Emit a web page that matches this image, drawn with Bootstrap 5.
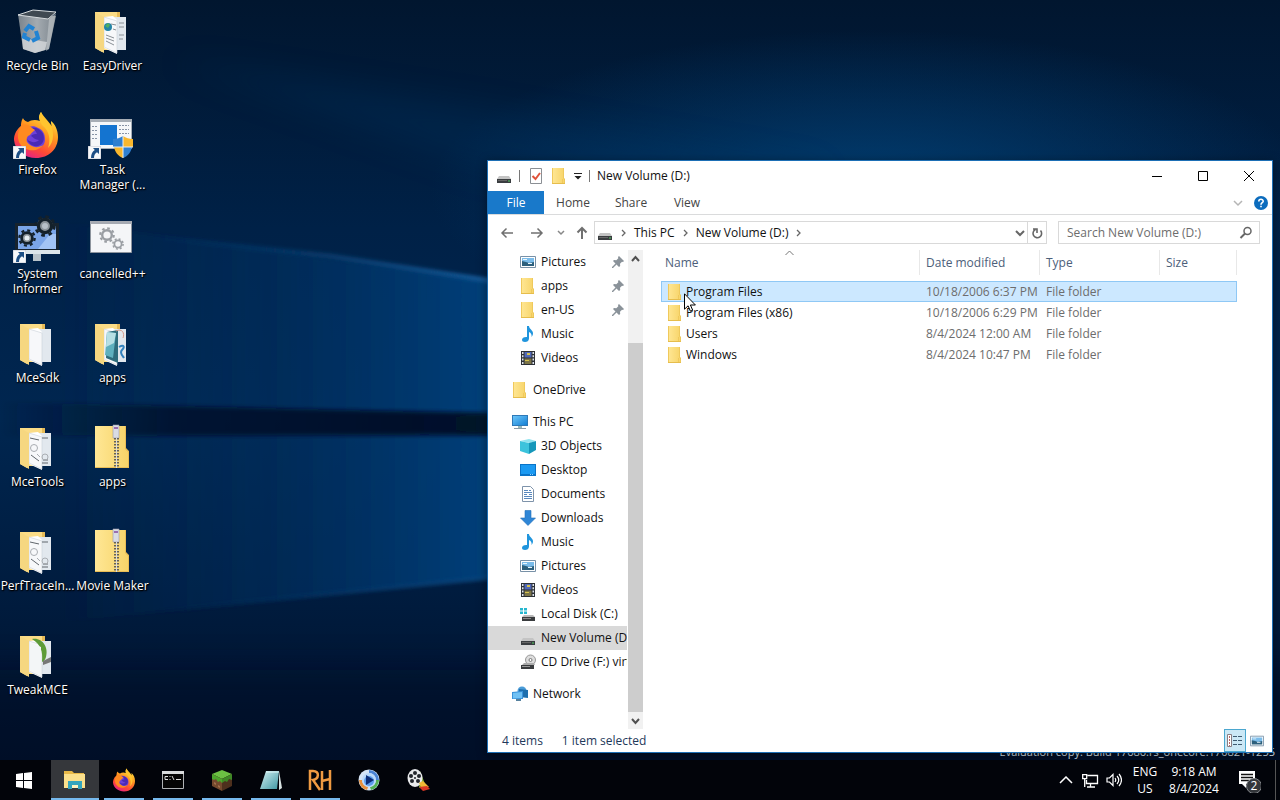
<!DOCTYPE html>
<html lang="en">
<head>
<meta charset="utf-8">
<meta name="viewport" content="width=device-width, initial-scale=1">
<title>New Volume (D:)</title>
<link href="https://cdn.jsdelivr.net/npm/bootstrap@5.3.0/dist/css/bootstrap.min.css" rel="stylesheet">
<style>
  body { font: 12px/16px "Open Sans", "Noto Sans", sans-serif; background: #001633; color: #111; }
  button { font: inherit; color: inherit; background: none; border: 0; padding: 0; }
  a { color: inherit; text-decoration: none; }
  svg { display: block; flex: none; }
  .i16 { width: 16px; height: 16px; }
  .wallpaper { inset: 0; width: 100%; height: 100%; }
  .desk-icons { display: grid; grid-template-rows: repeat(7, 104px); grid-auto-columns: 75px; grid-auto-flow: column; width: max-content; }
  .desk-icon { padding-top: 7px; color: #fff; line-height: 15px; text-align: center; text-shadow: 0 1px 2px #000, 1px 1px 1px #000; white-space: nowrap; }
  .desk-icon svg { width: 48px; height: 48px; margin: 0 13px 3px 12px; overflow: visible; }
  .watermark { right: 5px; bottom: 0; color: #dbe6f2; font-size: 11px; }
  .explorer { left: 487px; right: 7px; top: 160px; bottom: 7px; border: 1px solid #1d6fb5; background: #fff; box-shadow: 0 2px 10px rgba(0,0,0,.45); }
  .titlebar { height: 30px; padding-left: 8px; gap: 7px; }
  .vsep { width: 1px; height: 12px; background: #777; }
  .quick { gap: 7px; padding-left: 1px; }
  .winbtn { width: 46px; height: 29px; }
  .ribbon { height: 24px; border-bottom: 1px solid #dadbdc; color: #444; }
  .ribbon .tab { width: 58px; }
  .ribbon .tab-file { width: 56px; background: #1979ca; color: #fff; }
  .ribbon .tab-view { width: 54px; }
  .addrbar { height: 35px; padding: 0 12px 0 5px; }
  .navbtn { width: 28px; height: 22px; margin-right: 2px; }
  .navbtn-sm { width: 16px; }
  .navbtn-up { width: 25px; }
  .field { height: 23px; border: 1px solid #d9d9d9; }
  .crumbs { gap: 8px; padding-left: 2px; }
  .drop { margin-right: 2px; }
  .refresh { width: 19px; border-left: 1px solid #d9d9d9; }
  .search { width: 202px; margin-left: 11px; padding: 0 6px 0 8px; }
  .search input { border: 0; outline: 0; padding: 0; background: none; min-width: 0; color: #6d6d6d; }
  .search input::placeholder { color: #6d6d6d; opacity: 1; }
  .panes { min-height: 0; }
  .tree { flex: 0 0 140px; padding-right: 1px; gap: 8px; overflow: hidden; }
  .tree a { height: 24px; padding-left: 32px; gap: 5px; white-space: nowrap; overflow: hidden; }
  .tree a.top { padding-left: 24px; }
  .tree a.current { background: #d9d9d9; }
  .tree .pin { width: 12px; height: 12px; margin: 0 3px 0 auto; }
  .sbar { flex: 0 0 15px; background: #f1f1f1; }
  .sbar button { height: 17px; }
  .thumb { background: #cdcdcd; flex: 370 0 0; }
  .space { flex: 76 0 0; }
  .files { min-width: 0; padding: 0 35px 0 18px; }
  .files table { border-collapse: separate; border-spacing: 0; table-layout: fixed; }
  .files th { height: 25px; padding: 0 6px; font-weight: 400; color: #4c607a; border-right: 1px solid #e8e8e8; position: relative; }
  .files th:first-child { padding-left: 4px; }
  .files thead::after { content: ""; display: block; height: 6px; }
  .files td { height: 21px; padding: 0 6px; color: #6d6d6d; white-space: nowrap; border: solid transparent; border-width: 1px 0; }
  .files td:first-child { color: #111; }
  .files td a { gap: 3px; }
  .files .selected td { background: #cce8ff; border-color: #8fc8f5; }
  .files .selected td:first-child { border-left-width: 1px; padding-left: 5px; }
  .files .selected td:last-child { border-right-width: 1px; }
  .c-date, .c-type { width: 120px; }
  .c-size { width: 77px; }
  .sort { left: 50%; top: 0; margin-left: -5px; }
  .pointer { left: 196px; top: 132px; width: 12px; height: 19px; }
  .statusbar { height: 23px; padding-left: 14px; gap: 19px; color: #1e395b; }
  .viewbtn { width: 22px; height: 23px; }
  .viewbtn.on { background: #cbe8f6; border: 1px solid #4ba7cf; }
  .taskbar { height: 40px; background: #02040a; color: #fff; }
  .task { width: 48px; height: 40px; margin-right: 1px; position: relative; display: flex; align-items: center; justify-content: center; }
  .task.start { margin-right: 3px; }
  .task svg { width: 24px; height: 24px; }
  .task.open::after { content: ""; position: absolute; left: 4px; right: 4px; bottom: 0; height: 2px; background: #76b9ed; }
  .task.active { background: #35373b; }
  .task.active::after { left: 0; right: 0; }
  .traybtn { width: 24px; }
  .tray-text { line-height: 17px; text-align: center; }
  .lang { width: 38px; }
  .clock { width: 60px; }
  .notice { width: 51px; padding-right: 3px; }
  .showdesk { width: 5px; border-left: 1px solid #555; }
</style>
</head>
<body class="vh-100 d-flex flex-column overflow-hidden">

<svg width="0" height="0" class="position-absolute" aria-hidden="true">
  <defs>
    <linearGradient id="gFold" x1="0" x2="1"><stop offset="0" stop-color="#ffe795"/><stop offset="1" stop-color="#f7d469"/></linearGradient>
    <linearGradient id="gFox" x1=".8" y1="0" x2=".3" y2="1"><stop offset="0" stop-color="#fff14a"/><stop offset=".4" stop-color="#ff9a20"/><stop offset=".75" stop-color="#ff4a34"/><stop offset="1" stop-color="#e3208a"/></linearGradient>
    <linearGradient id="gBin" x1="0" x2="1"><stop offset="0" stop-color="#79838c"/><stop offset=".5" stop-color="#a4abb1"/><stop offset="1" stop-color="#7b848c"/></linearGradient>
    <linearGradient id="gBlue" x1="0" y1="0" x2="1" y2="1"><stop offset="0" stop-color="#6cc6fa"/><stop offset="1" stop-color="#1580d4"/></linearGradient>
    <linearGradient id="gNote" x1="0" y1="0" x2="1" y2="1"><stop offset="0" stop-color="#d6f2f4"/><stop offset="1" stop-color="#3e97a3"/></linearGradient>
    <symbol id="gear" viewBox="-10 -10 20 20"><circle r="6" fill="none" stroke="currentColor" stroke-width="3"/><circle r="8.5" fill="none" stroke="currentColor" stroke-width="2.6" stroke-dasharray="3.3 3.376"/></symbol>
    <symbol id="folder" viewBox="0 0 16 16"><path fill="#e6bd4c" d="M1 0h12v10l1 1v5H1z"/><path fill="url(#gFold)" d="M1 0h11.500v10.500l1 1V15H1z"/><path fill="#f0c95c" d="M1 0h1v15H1zM11 11h1v4h-1z"/></symbol>
    <symbol id="drive" viewBox="0 0 16 16"><path fill="#c4c4c4" d="M3 8h10l2 3H1z"/><path fill="#3a3d40" d="M1 11h14v4H1z"/><path fill="#666" d="M2 12h9v1H2z"/><path fill="#52d060" d="M12 12.500h2v1h-2z"/></symbol>
    <symbol id="drivec" viewBox="0 0 16 16"><path fill="#27b7cf" d="M0 2h3v2.500H0zM4 2h3v2.500H4zM0 5.500h3V8H0zM4 5.500h3V8H4z"/><path fill="#b8b8b8" d="M4 9h9l2 2H2z"/><path fill="#3a3c3e" d="M2 11h13v4H2z"/><path fill="#888" d="M3 12h8v1H3z"/></symbol>
    <symbol id="cdrom" viewBox="0 0 16 16"><circle cx="10.500" cy="6" r="5" fill="#ddd" stroke="#999"/><circle cx="10.500" cy="6" r="1.500" fill="#fff" stroke="#777"/><path fill="#aaa" d="M4 9h10l1 2H2z"/><path fill="#3a3c3e" d="M1 11h13v4H1z"/><path fill="#999" d="M2 12h8v1H2z"/></symbol>
    <symbol id="pict" viewBox="0 0 16 16"><path fill="#fff" stroke="#7891a7" d="M.5 2.500h15v11H.5z"/><path fill="#7bbcea" d="M2 4h12v5H2z"/><path fill="#2d607d" d="M2 7l4 1 3 1 5-1v4H2z"/><path fill="#e9f5fb" d="M3 5h4v1H3zM8 9h4v1H8z"/></symbol>
    <symbol id="music" viewBox="0 0 16 16"><path fill="#2095dd" d="M7 0h2c0 3 4 4 4 7.500 0 1.500-.8 2.500-1.500 3.500.5-2.500-.5-4-2.500-5v6.500C9 15 7 16 5 16s-3-1-3-2.300C2 12 4 10.700 7 11z"/></symbol>
    <symbol id="video" viewBox="0 0 16 16"><path fill="#2c3036" d="M1 1h14v14H1z"/><path fill="#dfe4ec" d="M2 2h1.500v2H2zM2 5.300h1.500v2H2zM2 8.600h1.500v2H2zM2 12h1.500v2H2zM12.500 2H14v2h-1.500zM12.500 5.300H14v2h-1.500zM12.500 8.600H14v2h-1.500zM12.500 12H14v2h-1.500z"/><path fill="#5169b8" d="M4.500 2h7v5.500h-7z"/><path fill="#7c7548" d="M4.500 8.500h7V14h-7z"/><path fill="#d5c24e" d="M7 3h3v2H7zM5 10h4v1H5z"/></symbol>
    <symbol id="pc" viewBox="0 0 16 16"><path fill="#2e79b8" d="M0 1h16v11H0z"/><path fill="url(#gBlue)" d="M1 2h14v9H1z"/><path fill="#9bb" d="M6 12h4v2H6z"/><path fill="#8b9ba8" d="M2 14h12v1H2z"/></symbol>
    <symbol id="cube" viewBox="0 0 16 16"><path fill="#8fe3ef" d="M0 3l9-2 7 2-6 2z"/><path fill="#3cc3dc" d="M0 3l9 2v11l-9-3z"/><path fill="#1597ba" d="M16 3L9 5v11l7-4z"/></symbol>
    <symbol id="desk" viewBox="0 0 16 16"><path fill="#0a74c8" d="M0 2h16v12H0z"/><path fill="#1b9af2" d="M1 3h14v9H1z"/><path fill="#8fd0ff" d="M10 12h1v1h-1zM12 12h1v1h-1z"/></symbol>
    <symbol id="docs" viewBox="0 0 16 16"><path fill="#fff" stroke="#7e93aa" d="M2.500.5h8l3 3v12h-11z"/><path stroke="#5888bd" d="M4 4.500h4M4 6.500h8M4 8.500h3M4 10.500h8M4 12.500h8M9 4.500h2M9 8.500h3"/></symbol>
    <symbol id="down" viewBox="0 0 16 16"><path fill="#2f86d6" stroke="#2270b8" stroke-width=".6" d="M5 .5h6V8h4.500L8 15.500.5 8H5z"/></symbol>
    <symbol id="net" viewBox="0 0 16 16"><circle cx="10" cy="5" r="4.500" fill="#4a9cd8"/><path fill="#1e6fae" d="M7 3l9 1v8l-9-1z"/><path fill="#3a92da" d="M0 6l11-1v8L0 13z"/><path fill="#70c1f4" d="M1 7l9-1v6l-9 .5z"/><path fill="#56819e" d="M4 13h5v2H4z"/></symbol>
    <symbol id="pinic" viewBox="0 0 12 12"><path fill="#8a9299" d="M7 0l5 5-1 1-1-.3-2 2 .2 2.300L7 11 4.500 8.500 1 12H0v-1l3.500-3.500L1 5l1-1 2.300.2 2-2L6 1z"/></symbol>
    <symbol id="fox" viewBox="0 0 48 48"><path fill="url(#gFox)" d="M29 1c-3 4-2 7-1 9-5-2-9-1-12 1-4-1-5-4-5-4-2 3-2 6-2 8C3 20 2 25 2 29c1 11 11 18 22 18 13 0 22-9 22-21 0-7-3-13-7-16 0 2 0 4 1 5C35 11 31 7 29 1z"/><path fill="#6d40d8" d="M33 28c0 7-5 10-10 10-6 0-10-4-10-9 0-6 4-8 7-8-2-2-4-3-7-2 3-4 9-5 13-2 5 2 7 6 7 11z"/><path fill="#4a2ab5" d="M30 21c3 4 3 12-4 14-6 1-10-3-11-7 4 4 9 4 12 1-4 0-6-3-8-4 2-2 4-2 6-2-1-3-3-5-6-6 4-1 8 0 11 4z"/><path fill="#ff8a20" d="M9 15c4-3 8-1 11 2 1 1 2 1 3 2-2 2-4 3-5 5-3 1-4 4-3 7 4 5 10 7 16 3-4 7-19 8-24-3-2-6-1-11 2-16z"/><path fill="#ffc42f" d="M29 1c4 8 13 11 12 24 0 5-2 9-5 12 3-9 1-17-5-22-3-3-5-9-2-14z"/></symbol>
    <symbol id="arrow" viewBox="0 0 13 13"><path fill="#f6f8fa" stroke="#aab" stroke-width=".6" d="M0 0h13v13H0z"/><path fill="#1d4f85" d="M5 2h6v6L9 6.200C7 7.500 6 9 6 12H3c0-4 1.500-6.500 3.800-8z"/></symbol>
    <symbol id="openf" viewBox="0 0 48 48"><path fill="#fbdc86" d="M8 5h25v38H15v2l-7-4z"/><path fill="#e7bb58" d="M30 5h3v5h-3z"/><path fill="#e2e8ee" d="M24 10h15v33H24z"/><path fill="#fff" d="M17 10l9-1 4 4v34l-13-6z"/><path fill="#f7f8fa" stroke="#c9d0d8" stroke-width=".6" d="M17 10l13 4v32l-13-6z"/><path fill="#f6d780" d="M8 5l9 5v36l-9-5z"/></symbol>
    <symbol id="docmarks" viewBox="0 0 48 48"><g fill="none" stroke="#a9adb2"><path d="M18 15l9 2M30 15h6M19 32l8 6M30 40h6M31 37h5" stroke="#60666c"/><circle cx="22" cy="25" r="3.500"/><circle cx="33" cy="34" r="3"/><path d="M25 31l3 3"/></g></symbol>
    <symbol id="zip" viewBox="0 0 48 48"><path fill="#e9bd56" d="M8 3h31v22l3 3v17H8z"/><path fill="url(#gFold)" d="M8 3h30v23l3 3v15H8z"/><path fill="#d9dce3" stroke="#9a9cab" stroke-width=".6" d="M26 2h6v13h-6z"/><path fill="#9a6eb0" d="M27 4h4v2h-4z"/><path stroke="#63605a" stroke-width="5" stroke-dasharray="1.500 1.500" d="M29.500 15v30"/><path stroke="#ddd" d="M29.500 15v30"/></symbol>
  </defs>
</svg>

<main class="flex-grow-1 position-relative">
  <svg class="wallpaper position-absolute" viewBox="0 0 1280 760" preserveAspectRatio="none" aria-hidden="true">
    <defs>
      <linearGradient id="wBase" x1="0" y1="0" x2="0" y2="1"><stop offset="0" stop-color="#01162f"/><stop offset=".3" stop-color="#002147"/><stop offset=".55" stop-color="#002650"/><stop offset=".8" stop-color="#001b3d"/><stop offset="1" stop-color="#00112a"/></linearGradient>
      <radialGradient id="wTop"><stop offset="0" stop-color="#023f73" stop-opacity=".95"/><stop offset="1" stop-color="#023f73" stop-opacity="0"/></radialGradient>
      <linearGradient id="wUp" gradientUnits="userSpaceOnUse" x1="60" y1="0" x2="490" y2="0"><stop offset="0" stop-color="#012e5e" stop-opacity="0"/><stop offset=".5" stop-color="#012f60" stop-opacity=".6"/><stop offset="1" stop-color="#00407b"/></linearGradient>
      <linearGradient id="wLine" gradientUnits="userSpaceOnUse" x1="150" y1="0" x2="490" y2="0"><stop offset="0" stop-color="#1b65a6" stop-opacity="0"/><stop offset="1" stop-color="#2173bb"/></linearGradient>
      <linearGradient id="wBand" gradientUnits="userSpaceOnUse" x1="0" y1="0" x2="490" y2="0"><stop offset="0" stop-color="#00132b" stop-opacity="0"/><stop offset=".35" stop-color="#00132b" stop-opacity=".8"/><stop offset="1" stop-color="#001229"/></linearGradient>
      <filter id="b2" filterUnits="userSpaceOnUse" x="-100" y="-100" width="1480" height="960"><feGaussianBlur stdDeviation="2"/></filter>
      <filter id="b12" filterUnits="userSpaceOnUse" x="-200" y="-200" width="1680" height="1160"><feGaussianBlur stdDeviation="16"/></filter>
    </defs>
    <path fill="url(#wBase)" d="M0 0h1280v760H0z"/>
    <ellipse cx="870" cy="190" rx="440" ry="160" fill="url(#wTop)"/>
    <path fill="#023a6a" opacity=".25" filter="url(#b12)" d="M170 60l320 50 330 60v60l-340-60z"/>
    <path fill="url(#wUp)" filter="url(#b2)" d="M60 222l440 60v131L60 406z"/>
    <path fill="url(#wUp)" filter="url(#b2)" d="M60 436h440v141L60 622z"/>
    <path fill="none" stroke="url(#wLine)" stroke-width="3" filter="url(#b2)" d="M150 236l180 20 170 26"/>
    <path fill="none" stroke="url(#wLine)" stroke-width="2" opacity=".6" filter="url(#b2)" d="M150 612l350-35"/>
    <path fill="url(#wBand)" filter="url(#b2)" d="M0 402l500 12v20L0 436z"/>
    <path fill="#001128" opacity=".5" filter="url(#b12)" d="M-100 670h1500v150H-100z"/>
  </svg>

  <div class="desk-icons position-relative">
    <a class="desk-icon" href="#"><svg viewBox="0 0 48 48"><path fill="url(#gBin)" d="M6 7l38 2-7 33-14 4-12-4z"/><path fill="#3f4952" stroke="#d5dadd" d="M6 8L21 3l23 2-8 7z"/><path fill="#c4c9cd" opacity=".6" d="M37 12l7-6-7 36-3 2z"/><path fill="#d9dcdf" opacity=".75" d="M10 31l25 4-2 8-10 3-12-4z"/><g fill="none" stroke="#2283d2" stroke-width="4"><path d="M13 24l4-5 5 3M24 24l2 7-6 3M18 33l-6-3 1-4"/></g></svg>Recycle Bin</a>
    <a class="desk-icon" href="#"><svg viewBox="0 0 48 48"><use href="#fox"/><use href="#arrow" x="1" y="35" width="13" height="13"/></svg>Firefox</a>
    <a class="desk-icon" href="#"><svg viewBox="0 0 48 48"><path fill="#17232e" d="M3 8h44v29H3z"/><path fill="#7aa5e8" d="M6 11h38v23H6z"/><path fill="#a3c4f4" d="M26 34L38 19h6v15z"/><path fill="#dce5ea" d="M2 35h46v4H2z"/><path fill="#b9c3ca" d="M21 39h8v7h-8z"/><g color="#14212b"><circle cx="33" cy="11" r="8" fill="#8c949a"/><use href="#gear" x="22" width="22" height="22"/><circle cx="15" cy="23" r="6" fill="#8c949a"/><use href="#gear" x="6" y="14" width="18" height="18"/><circle cx="33" cy="11" r="3" fill="#b7c0c8"/><circle cx="15" cy="23" r="2.500" fill="#e7eef2"/></g><use href="#arrow" x="1" y="35" width="13" height="13"/></svg>System<br>Informer</a>
    <a class="desk-icon" href="#"><svg viewBox="0 0 48 48"><use href="#openf"/></svg>MceSdk</a>
    <a class="desk-icon" href="#"><svg viewBox="0 0 48 48"><use href="#openf"/><use href="#docmarks"/></svg>MceTools</a>
    <a class="desk-icon" href="#"><svg viewBox="0 0 48 48"><use href="#openf"/><use href="#docmarks"/></svg>PerfTraceIn...</a>
    <a class="desk-icon" href="#"><svg viewBox="0 0 48 48"><use href="#openf"/><path fill="#5d9b38" d="M20 8c10-2 17 8 14 18-1 3-2 4-4 5 1-11-1-17-10-23z"/><path fill="#777" d="M31 30l8-4v5l-8 3z"/><path fill="#f3f6f7" d="M18 12l11 4v29l-11-6z"/></svg>TweakMCE</a>
    <a class="desk-icon" href="#"><svg viewBox="0 0 48 48"><use href="#openf"/><circle cx="21" cy="20" r="4" fill="#2484a6"/><path fill="#4fae62" d="M18 19l3-3 2 2-2 3z"/><path stroke="#8a9096" d="M24 17l5 1M19 28l8 3M19 31l8 3M19 34l8 4M26 22l3 1M32 16h5M32 20h5M32 28h5M32 32h4"/></svg>EasyDriver</a>
    <a class="desk-icon" href="#"><svg viewBox="0 0 48 48"><path fill="#f5f7f9" stroke="#a6adb5" d="M3.500 8.500h41v29h-41z"/><path fill="#a6adb5" d="M3 8h42v3H3z"/><path stroke="#8793a5" stroke-dasharray="2 1" d="M5 15.500h6M5 19.500h6M5 23.500h6M5 27.500h6M32 14.500h10M32 18.500h10M32 22.500h10"/><path fill="#1474d0" d="M13 14h17v20H13z"/><path fill="#2f7fd0" d="M36 25c-3 2-6 3-10 3v8h10zM36 36h9c-1 5-4 9-9 11z"/><path fill="#f9b72c" d="M36 25c3 2 6 3 10 3v8H36zM36 36h-9c1 5 4 9 9 11z"/><path stroke="#e8edf2" d="M36 25v22M26 36h20"/><use href="#arrow" x="1" y="35" width="13" height="13"/></svg>Task<br>Manager (...</a>
    <a class="desk-icon" href="#"><svg viewBox="0 0 48 48"><path fill="#f4f5f7" stroke="#8d949d" d="M3.500 6.500h41v31h-41z"/><path fill="#a6aab2" d="M3 6h42v3H3z"/><g color="#9a9ea3"><use href="#gear" x="12" y="12" width="16" height="16"/><use href="#gear" x="25" y="23" width="12" height="12"/></g></svg>cancelled++</a>
    <a class="desk-icon" href="#"><svg viewBox="0 0 48 48"><use href="#openf"/><path fill="#2e6c7c" d="M20 13l11-2v33l-12-5z"/><path fill="#5fb0be" d="M20 13l9 1-3 25-8-3z"/><path fill="#b7dfe4" d="M20 13l9 1-2 10-8 4z"/><path fill="none" stroke="#3382be" stroke-width="2" d="M32 28c5-3 6 0 3 3s1 6 2 8"/><path fill="none" stroke="#d49a8b" d="M29 12c6-3 9 2 7 7"/></svg>apps</a>
    <a class="desk-icon" href="#"><svg viewBox="0 0 48 48"><use href="#zip"/></svg>apps</a>
    <a class="desk-icon" href="#"><svg viewBox="0 0 48 48"><use href="#zip"/></svg>Movie Maker</a>
  </div>

  <div class="watermark position-absolute">Evaluation copy. Build 17686.rs_onecore.170821-1255</div>

  <section class="explorer position-absolute d-flex flex-column" aria-label="File Explorer">
    <header class="titlebar d-flex align-items-center">
      <svg class="i16"><use href="#drive"/></svg>
      <span class="vsep"></span>
      <div class="quick d-flex align-items-center">
        <button aria-label="Properties"><svg class="i16" viewBox="0 0 16 16"><path fill="#fff" stroke="#8b8f94" d="M2.500.5h11v15h-11z"/><path fill="none" stroke="#e0533a" stroke-width="2" d="M4.500 8l3 3 4.500-6"/></svg></button>
        <button aria-label="New folder"><svg class="i16"><use href="#folder"/></svg></button>
        <button aria-label="Customize Quick Access Toolbar"><svg width="8" height="10" viewBox="0 0 8 10"><path fill="#222" d="M0 2h8v1H0zM.5 5h7L4 8.500z"/></svg></button>
      </div>
      <span class="vsep"></span>
      <span>New Volume (D:)</span>
      <div class="ms-auto d-flex">
        <button class="winbtn d-flex align-items-center justify-content-center" aria-label="Minimize"><svg width="10" height="10"><path stroke="#000" d="M0 5.500h10"/></svg></button>
        <button class="winbtn d-flex align-items-center justify-content-center" aria-label="Maximize"><svg width="10" height="10"><path fill="none" stroke="#000" d="M.5.5h9v9h-9z"/></svg></button>
        <button class="winbtn d-flex align-items-center justify-content-center" aria-label="Close"><svg width="10" height="10"><path stroke="#000" d="M0 0l10 10M10 0L0 10"/></svg></button>
      </div>
    </header>

    <div class="ribbon d-flex align-items-stretch">
      <button class="tab-file">File</button>
      <button class="tab">Home</button>
      <button class="tab">Share</button>
      <button class="tab-view">View</button>
      <button class="ms-auto me-2" aria-label="Expand the ribbon"><svg class="i16" viewBox="0 0 16 16"><path fill="none" stroke="#b5b5b5" stroke-width="1.500" d="M4 6l4 4 4-4"/></svg></button>
      <button class="me-1" aria-label="Help"><svg width="14" height="14" viewBox="0 0 14 14"><circle cx="7" cy="7" r="7" fill="#0c6cbd"/><path fill="none" stroke="#fff" stroke-width="1.600" d="M4.800 5.500c0-3 4.400-2.800 4.400-.3C9.200 6.800 7 6.700 7 8.700M7 9.700v1.600"/></svg></button>
    </div>

    <div class="addrbar d-flex align-items-center">
      <button class="navbtn d-flex align-items-center justify-content-center" aria-label="Back"><svg width="14" height="12"><path fill="none" stroke="#707070" stroke-width="1.500" d="M13 6H2M6.500 1.500L2 6l4.500 4.500"/></svg></button>
      <button class="navbtn d-flex align-items-center justify-content-center" aria-label="Forward"><svg width="14" height="12"><path fill="none" stroke="#707070" stroke-width="1.500" d="M1 6h11M7.500 1.500L12 6l-4.500 4.500"/></svg></button>
      <button class="navbtn-sm d-flex align-items-center justify-content-center" aria-label="Recent locations"><svg width="8" height="6"><path fill="none" stroke="#888" stroke-width="1.500" d="M1 1l3 3 3-3"/></svg></button>
      <button class="navbtn-up d-flex align-items-center justify-content-center" aria-label="Up"><svg width="12" height="14"><path fill="none" stroke="#707070" stroke-width="2" d="M6 13V2M1.500 6.500L6 2l4.500 4.500"/></svg></button>
      <nav class="field flex-grow-1 d-flex align-items-center" aria-label="Address">
        <div class="crumbs flex-grow-1 d-flex align-items-center">
          <svg class="i16"><use href="#drive"/></svg>
          <svg width="5" height="8"><path fill="none" stroke="#666" stroke-width="1.300" d="M1 1l3 3-3 3"/></svg>
          <a href="#">This PC</a>
          <svg width="5" height="8"><path fill="none" stroke="#666" stroke-width="1.300" d="M1 1l3 3-3 3"/></svg>
          <a href="#">New Volume (D:)</a>
          <svg width="5" height="8"><path fill="none" stroke="#666" stroke-width="1.300" d="M1 1l3 3-3 3"/></svg>
        </div>
        <button class="drop" aria-label="Previous locations"><svg width="10" height="8"><path fill="none" stroke="#666" stroke-width="2" d="M1 2l4 4 4-4"/></svg></button>
        <button class="refresh align-self-stretch d-flex align-items-center justify-content-center" aria-label="Refresh"><svg width="12" height="12" viewBox="0 0 12 12"><path fill="none" stroke="#666" stroke-width="1.600" d="M9.500 3.500a4.300 4.300 0 1 1-5-1M2 2h4v4"/></svg></button>
      </nav>
      <label class="field search d-flex align-items-center">
        <input class="flex-grow-1" type="text" placeholder="Search New Volume (D:)" aria-label="Search New Volume (D:)">
        <svg width="14" height="14" viewBox="0 0 14 14"><circle cx="8.500" cy="5" r="3.500" fill="none" stroke="#666" stroke-width="1.500"/><path stroke="#666" stroke-width="2" d="M6 7.500L1.500 12"/></svg>
      </label>
    </div>

    <div class="panes flex-grow-1 d-flex">
      <nav class="tree d-flex flex-column" aria-label="Navigation pane">
        <div>
          <a class="d-flex align-items-center" href="#"><svg class="i16"><use href="#pict"/></svg>Pictures<svg class="pin"><use href="#pinic"/></svg></a>
          <a class="d-flex align-items-center" href="#"><svg class="i16"><use href="#folder"/></svg>apps<svg class="pin"><use href="#pinic"/></svg></a>
          <a class="d-flex align-items-center" href="#"><svg class="i16"><use href="#folder"/></svg>en-US<svg class="pin"><use href="#pinic"/></svg></a>
          <a class="d-flex align-items-center" href="#"><svg class="i16"><use href="#music"/></svg>Music</a>
          <a class="d-flex align-items-center" href="#"><svg class="i16"><use href="#video"/></svg>Videos</a>
        </div>
        <a class="top d-flex align-items-center flex-shrink-0" href="#"><svg class="i16"><use href="#folder"/></svg>OneDrive</a>
        <div>
          <a class="top d-flex align-items-center" href="#"><svg class="i16"><use href="#pc"/></svg>This PC</a>
          <a class="d-flex align-items-center" href="#"><svg class="i16"><use href="#cube"/></svg>3D Objects</a>
          <a class="d-flex align-items-center" href="#"><svg class="i16"><use href="#desk"/></svg>Desktop</a>
          <a class="d-flex align-items-center" href="#"><svg class="i16"><use href="#docs"/></svg>Documents</a>
          <a class="d-flex align-items-center" href="#"><svg class="i16"><use href="#down"/></svg>Downloads</a>
          <a class="d-flex align-items-center" href="#"><svg class="i16"><use href="#music"/></svg>Music</a>
          <a class="d-flex align-items-center" href="#"><svg class="i16"><use href="#pict"/></svg>Pictures</a>
          <a class="d-flex align-items-center" href="#"><svg class="i16"><use href="#video"/></svg>Videos</a>
          <a class="d-flex align-items-center" href="#"><svg class="i16"><use href="#drivec"/></svg>Local Disk (C:)</a>
          <a class="current d-flex align-items-center" href="#"><svg class="i16"><use href="#drive"/></svg>New Volume (D:)</a>
          <a class="d-flex align-items-center" href="#"><svg class="i16"><use href="#cdrom"/></svg>CD Drive (F:) virtio</a>
        </div>
        <a class="top d-flex align-items-center flex-shrink-0" href="#"><svg class="i16"><use href="#net"/></svg>Network</a>
      </nav>
      <div class="sbar d-flex flex-column">
        <button class="d-flex align-items-center justify-content-center" aria-label="Scroll up"><svg width="9" height="8"><path fill="none" stroke="#505050" stroke-width="2" d="M1 6l3.500-4L8 6"/></svg></button>
        <div class="space"></div>
        <div class="thumb"></div>
        <button class="d-flex align-items-center justify-content-center" aria-label="Scroll down"><svg width="9" height="8"><path fill="none" stroke="#505050" stroke-width="2" d="M1 2l3.500 4L8 2"/></svg></button>
      </div>
      <div class="files flex-grow-1">
        <table class="w-100">
          <colgroup><col><col class="c-date"><col class="c-type"><col class="c-size"></colgroup>
          <thead>
            <tr><th scope="col">Name<svg class="sort position-absolute" width="9" height="6"><path fill="none" stroke="#777" d="M.5 5l4-4 4 4"/></svg></th><th scope="col">Date modified</th><th scope="col">Type</th><th scope="col">Size</th></tr>
          </thead>
          <tbody>
            <tr class="selected"><td><a class="d-flex align-items-center" href="#"><svg class="i16"><use href="#folder"/></svg>Program Files</a></td><td>10/18/2006 6:37 PM</td><td>File folder</td><td></td></tr>
            <tr><td><a class="d-flex align-items-center" href="#"><svg class="i16"><use href="#folder"/></svg>Program Files (x86)</a></td><td>10/18/2006 6:29 PM</td><td>File folder</td><td></td></tr>
            <tr><td><a class="d-flex align-items-center" href="#"><svg class="i16"><use href="#folder"/></svg>Users</a></td><td>8/4/2024 12:00 AM</td><td>File folder</td><td></td></tr>
            <tr><td><a class="d-flex align-items-center" href="#"><svg class="i16"><use href="#folder"/></svg>Windows</a></td><td>8/4/2024 10:47 PM</td><td>File folder</td><td></td></tr>
          </tbody>
        </table>
      </div>
    </div>

    <footer class="statusbar d-flex align-items-center">
      <span>4 items</span><span>1 item selected</span>
      <div class="ms-auto d-flex me-1">
        <button class="viewbtn on d-flex align-items-center justify-content-center" aria-label="Details view"><svg width="16" height="13"><path fill="#fff" stroke="#8a7d83" d="M.5.500h4v12h-4z"/><path stroke="#b66" stroke-dasharray="2 1" d="M2.500 2v10"/><path stroke="#3d5a70" stroke-dasharray="4 1" d="M6 2.500h10M6 6.500h10M6 10.500h10"/></svg></button>
        <button class="viewbtn d-flex align-items-center justify-content-center" aria-label="Large icons view"><svg width="14" height="14"><use href="#pict"/></svg></button>
      </div>
    </footer>
    <svg class="pointer position-absolute" viewBox="0 0 12 19"><path fill="#fff" stroke="#000" d="M.5.8v15.400l3.600-3.400 2.300 5.400 2.300-1-2.300-5.200h5z"/></svg>
  </section>
</main>

<footer class="taskbar d-flex position-relative">
  <button class="task start" aria-label="Start"><svg viewBox="0 0 24 24"><path fill="#fff" d="M4 6l7-1v7H4zM12 5l8-1v8h-8zM4 13h7v7l-7-1zM12 13h8v8l-8-1z"/></svg></button>
  <button class="task open active" aria-label="File Explorer"><svg viewBox="0 0 24 24"><path fill="#e8b948" d="M1 3h8l2 2h10v4H1z"/><path fill="#fbe08c" d="M1 6h21v14H1z"/><path fill="#35a5bd" d="M5 13h14v8h-4v-4H9v4H5z"/><path fill="#fff3c0" d="M9 17h6v3H9z"/></svg></button>
  <button class="task open" aria-label="Firefox"><svg><use href="#fox"/></svg></button>
  <button class="task open" aria-label="Command Prompt"><svg viewBox="0 0 24 24"><path fill="#050505" stroke="#aeb1b4" d="M1.500 3.500h21v17h-21z"/><path fill="#d8dadc" d="M1 3h22v3H1z"/><path fill="none" stroke="#ddd" d="M7 8.500H4v3h3M9 8v1M9 11v1M11 8l2 4M15 11.500h5"/></svg></button>
  <button class="task open" aria-label="Minecraft"><svg viewBox="0 0 24 24"><path fill="#6cc043" d="M2 6l10-4 10 4-10 5z"/><path fill="#73492d" d="M2 6l10 5v12L2 18z"/><path fill="#4d301d" d="M22 6l-10 5v12l10-5z"/><path fill="#4ca52c" d="M2 6l10 5v4l-2-2-2 1-2-3-2 1-2-1z"/><path fill="#3e8825" d="M22 6l-10 5v4l3-2 2 1 2-3 3 1z"/><path fill="#a06f4b" d="M4 14l2 1v2l-2-1zM8 17l2 1v2l-2-1z"/></svg></button>
  <button class="task open" aria-label="Notepad"><svg viewBox="0 0 24 24"><path fill="#d8e2e2" d="M20 3l3 17-3 2z"/><path fill="url(#gNote)" d="M7 3h13l-2 18H1z"/><path stroke="#e2f7f8" d="M7 4h13"/></svg></button>
  <button class="task open" aria-label="Resource Hacker"><svg viewBox="0 0 24 24"><g fill="none" stroke="#ef9a42" stroke-width="2.500"><path d="M2 22V3h3c7 0 6 8 0 9l7 10M14 3v19M22 2v20M14 13l8-2"/></g></svg></button>
  <button class="task" aria-label="Media Player"><svg viewBox="0 0 24 24"><circle cx="12" cy="12" r="10.500" fill="#d5e4f6"/><path fill="#4a83d5" d="M12 2a10 10 0 0 1 10 10h-3a7 7 0 0 0-7-7z"/><path fill="#53b153" d="M22 12a10 10 0 0 1-8 10l-1-3a7 7 0 0 0 6-7z"/><path fill="#e9903c" d="M2 12a10 10 0 0 0 8 10l1-3a7 7 0 0 1-6-7z"/><circle cx="12" cy="12" r="7" fill="#b9d8fa"/><circle cx="12" cy="13" r="5" fill="#5c9ded"/><path fill="#0c2c77" d="M9 7l8 5-8 5z"/></svg></button>
  <button class="task" aria-label="Movie Maker"><svg viewBox="0 0 24 24"><path fill="#7aab35" d="M14 3l5 13-6 4z"/><ellipse cx="9" cy="10" rx="7.500" ry="9" fill="#e9eaec"/><g fill="#22252b"><circle cx="9" cy="5" r="2"/><circle cx="5" cy="8" r="2"/><circle cx="13" cy="8" r="2"/><circle cx="6" cy="13" r="2"/><circle cx="12" cy="13" r="2"/><circle cx="9" cy="10" r="1"/></g><path fill="#f0b936" d="M13 15l4-2 6 6-7 2z"/><path fill="#d93825" d="M13 19l8-1 3 3-7 2z"/></svg></button>

  <div class="ms-auto d-flex align-items-stretch">
    <button class="traybtn d-flex align-items-center justify-content-center" aria-label="Show hidden icons"><svg width="14" height="8"><path fill="none" stroke="#fff" stroke-width="1.500" d="M1 7l6-6 6 6"/></svg></button>
    <button class="traybtn d-flex align-items-center justify-content-center" aria-label="Network"><svg width="17" height="15"><path fill="none" stroke="#fff" stroke-width="1.300" d="M5.500 2.500h10v8h-11V7M8.500 11v3M5 14h8M.7 1.700h4v4h-4zM2.700 5.500V14"/></svg></button>
    <button class="traybtn d-flex align-items-center justify-content-center" aria-label="Volume"><svg width="16" height="14"><path fill="none" stroke="#fff" stroke-width="1.200" d="M1 5h2.500L7 1.500v11L3.500 9H1zM9 5q1.500 2 0 4M11 3q3.500 4 0 8M13 1q5 6 0 12"/></svg></button>
    <button class="tray-text lang">ENG<br>US</button>
    <button class="tray-text clock">9:18 AM<br>8/4/2024</button>
    <button class="notice d-flex align-items-center justify-content-center position-relative" aria-label="2 notifications"><svg width="26" height="26" viewBox="0 0 26 26"><path fill="#fff" d="M4 4h16v13h-9v4l-4-4H4z"/><path stroke="#111" stroke-width="1.300" d="M6 7.500h12M6 10.500h12M6 13.500h8"/><circle cx="19" cy="19" r="7.500" fill="#33363a" stroke="#85888c"/><text x="19" y="23" fill="#fff" font-size="12" text-anchor="middle">2</text></svg></button>
    <div class="showdesk"></div>
  </div>
</footer>

<script src="https://cdn.jsdelivr.net/npm/bootstrap@5.3.0/dist/js/bootstrap.bundle.min.js"></script>
</body>
</html>
